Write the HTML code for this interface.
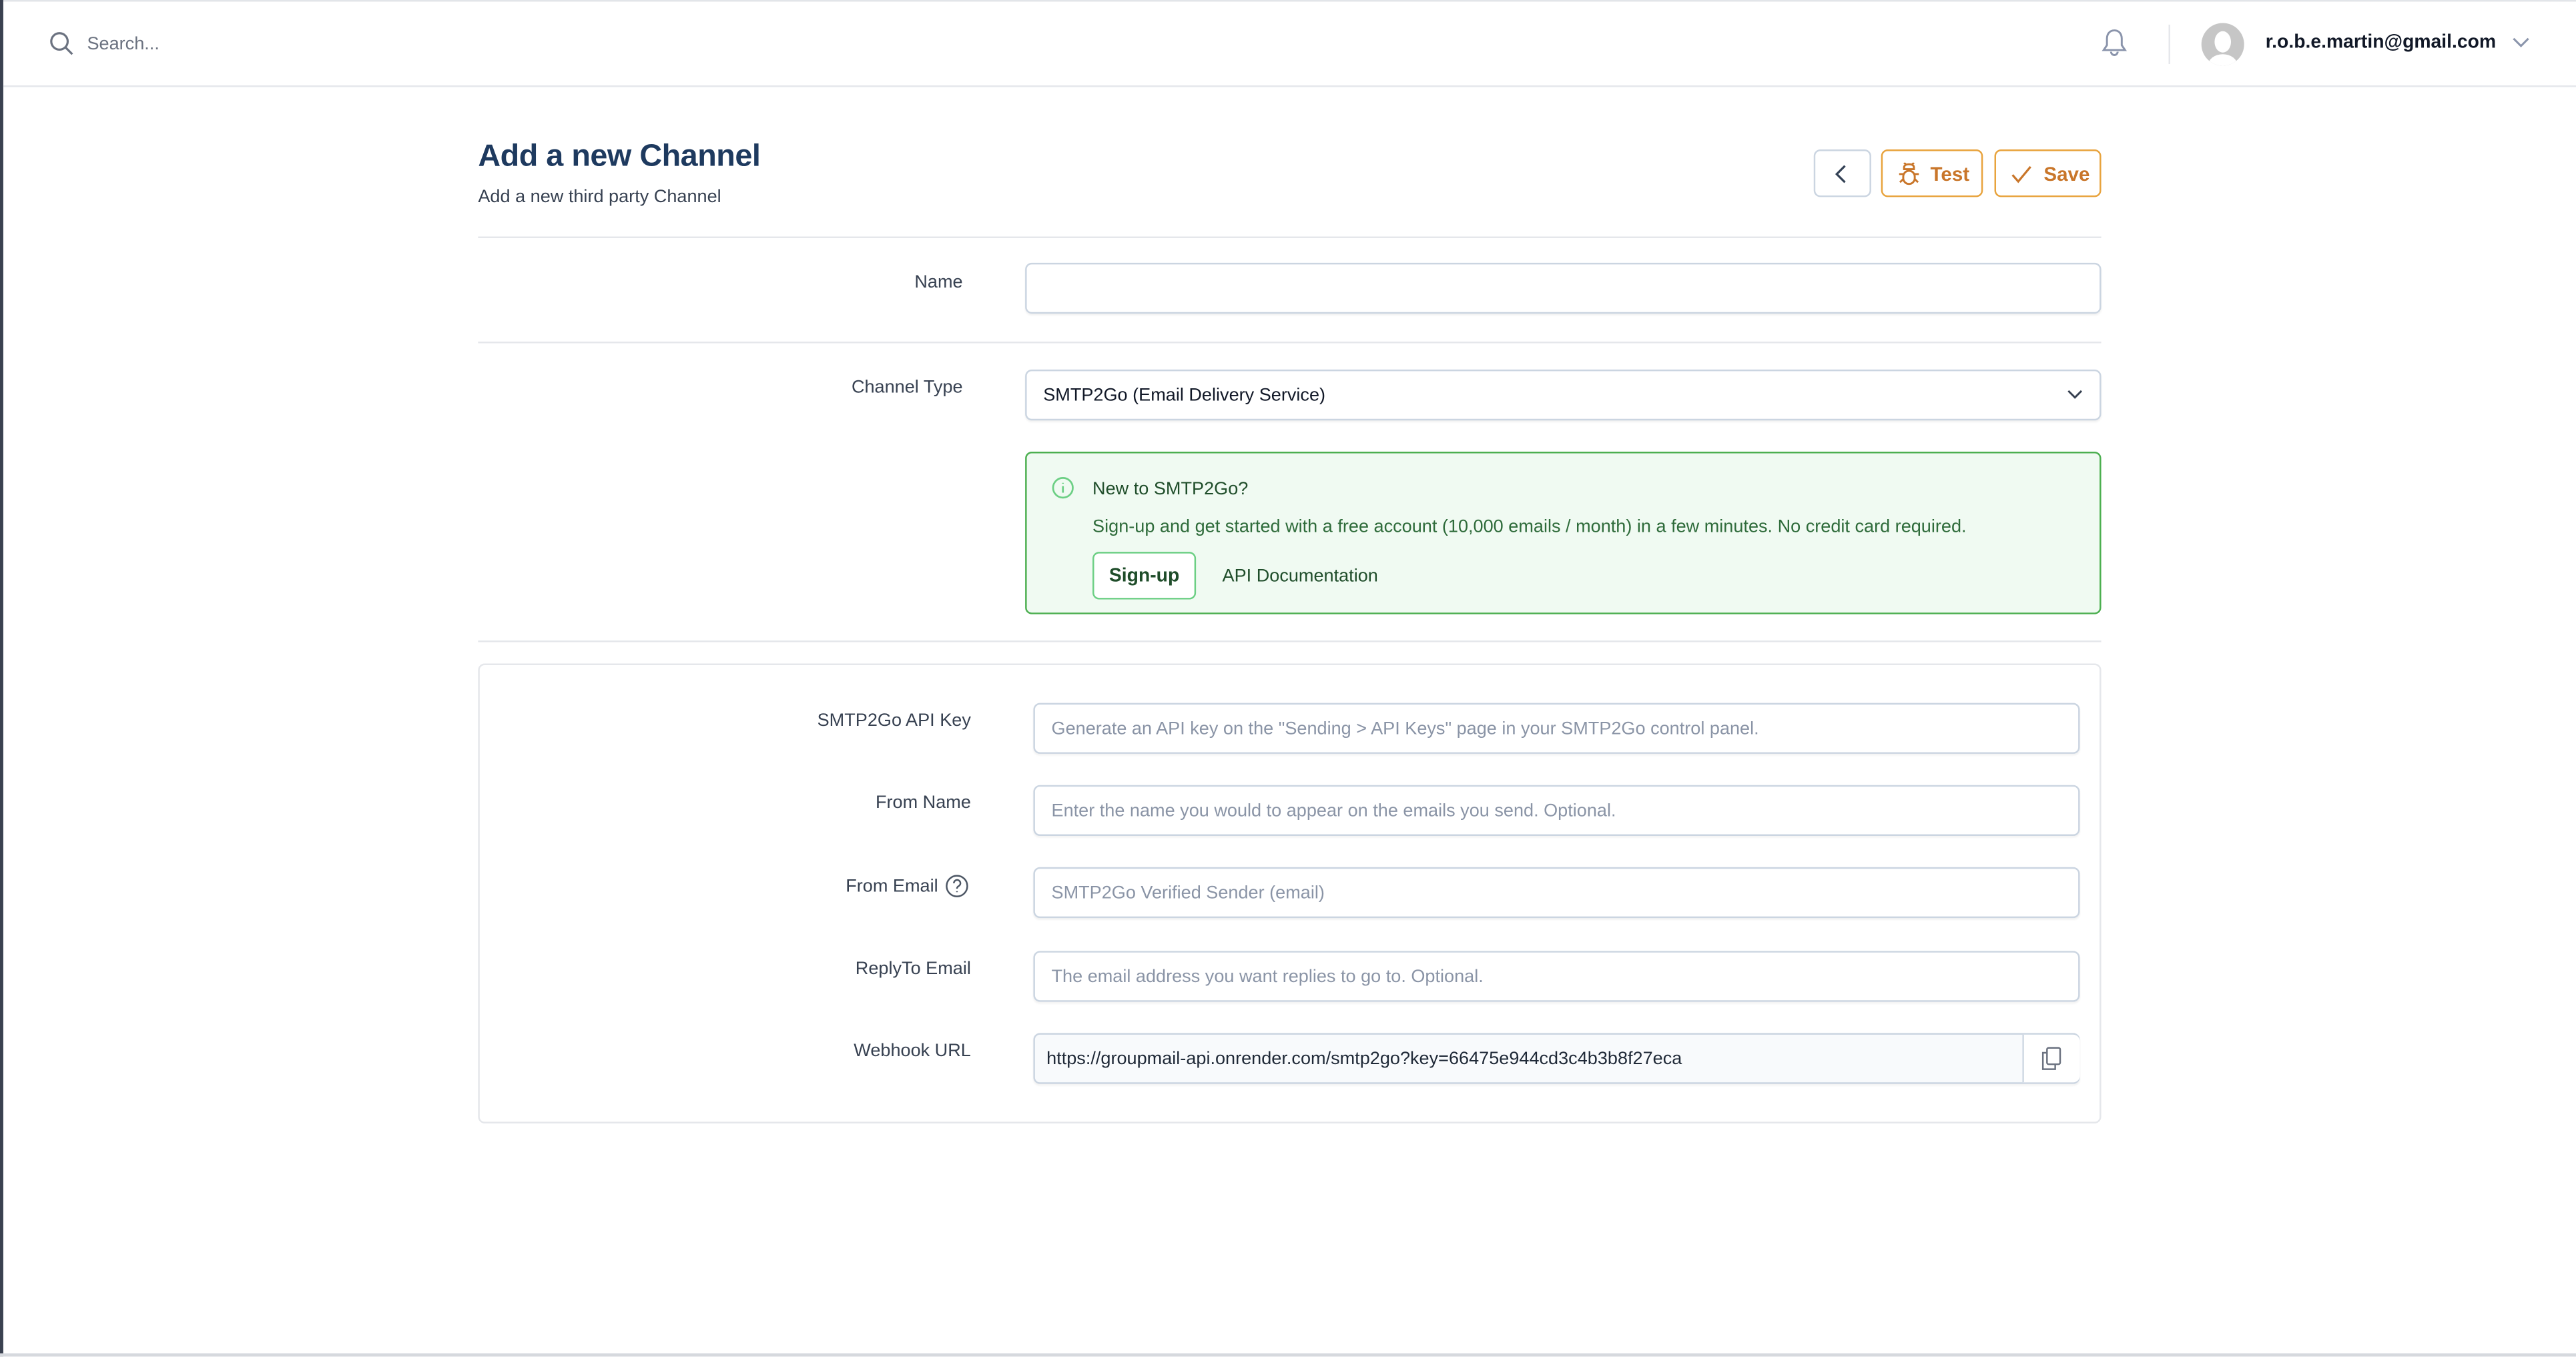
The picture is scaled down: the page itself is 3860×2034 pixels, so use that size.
<!DOCTYPE html>
<html><head><meta charset="utf-8"><style>
html,body{margin:0;padding:0;width:3860px;height:2034px;overflow:hidden;background:#fff}
#w{position:absolute;left:0;top:0;width:1568px;height:826px;transform:scale(2.46173);transform-origin:0 0;font-family:"Liberation Sans",sans-serif;color:#111827}
.a{position:absolute}
.inp{position:absolute;border:1px solid #cbd5e1;border-radius:4px;background:#fff;box-sizing:border-box;box-shadow:0 1px 1px rgba(0,0,0,.05)}
.ph{position:absolute;left:10px;top:9px;font-size:11px;color:#8a94a6}
.lbl{position:absolute;font-size:11px;color:#374151;text-align:right}
.hr{position:absolute;left:291px;width:988px;height:1px;background:#e5e7eb}
.btn{position:absolute;top:91px;height:29px;border:1px solid #e8a33d;border-radius:4px;box-sizing:border-box;color:#c9762a;font-weight:bold;font-size:12px}
</style></head><body><div id="w">
<div class="a" style="left:0;top:0;width:1568px;height:1px;background:#e2e5e9"></div>
<div class="a" style="left:0;top:0;width:2px;height:826px;background:#3a4150"></div>
<div class="a" style="left:0;top:824px;width:1568px;height:2px;background:#d6d9de"></div>
<div class="a" style="left:2px;top:52px;width:1566px;height:1px;background:#e5e7eb"></div>
<svg class="a" style="left:30px;top:19px" width="15" height="15" viewBox="0 0 15 15" fill="none" stroke="#6b7280" stroke-width="1.3"><circle cx="6.2" cy="6.2" r="5"/><path d="M10 10l4 4"/></svg>
<div class="a" style="left:53px;top:21px;font-size:11px;color:#6b7280">Search...</div>
<svg class="a" style="left:1279px;top:17px" width="16" height="19" viewBox="0 0 16 19" fill="none" stroke="#8a94ab" stroke-width="1.2"><path d="M8 1.5c-3 0-4.5 2.4-4.5 5v4L1.5 13.5h13l-2-3v-4c0-2.6-1.5-5-4.5-5z"/><path d="M6 14.5a2 2 0 004 0"/></svg>
<div class="a" style="left:1320px;top:15px;width:1px;height:24px;background:#e5e7eb"></div>
<div class="a" style="left:1340px;top:14px;width:26px;height:26px;border-radius:50%;background:#c6c6c6;overflow:hidden"><div class="a" style="left:8px;top:5px;width:10px;height:13px;border-radius:50%;background:#fff"></div><div class="a" style="left:4px;top:19px;width:18px;height:14px;border-radius:50%;background:#fff"></div></div>
<div class="a" style="left:1379px;top:20px;font-size:11.5px;font-weight:bold;color:#111827">r.o.b.e.martin@gmail.com</div>
<svg class="a" style="left:1529px;top:22px" width="11" height="8" viewBox="0 0 11 8" fill="none" stroke="#8a94ab" stroke-width="1.2"><path d="M1 1.5l4.5 4.5 4.5-4.5"/></svg>

<div class="a" style="left:291px;top:85px;font-size:19px;font-weight:bold;color:#1e3a5f;letter-spacing:-0.2px">Add a new Channel</div>
<div class="a" style="left:291px;top:114px;font-size:11px;color:#374151">Add a new third party Channel</div>
<div class="btn" style="left:1104px;width:35px;border-color:#cbd5e1"><svg class="a" style="left:11px;top:8px" width="10" height="12" viewBox="0 0 10 12" fill="none" stroke="#334155" stroke-width="1.3"><path d="M7 1L2 6l5 5"/></svg></div>
<div class="btn" style="left:1145px;width:62px"><svg class="a" style="left:9px;top:7px" width="14" height="15" viewBox="0 0 14 15" fill="none" stroke="#c9762a" stroke-width="1.2"><path d="M4 3c0-1.5 1.3-2 3-2s3 .5 3 2v1H4z"/><rect x="3.5" y="5" width="7" height="8" rx="3.5"/><path d="M3.5 7H1M10.5 7H13M3.5 10l-2 2M10.5 10l2 2M5 1L4 0M9 1l1-1"/></svg><span class="a" style="left:29px;top:7px">Test</span></div>
<div class="btn" style="left:1214px;width:65px"><svg class="a" style="left:9px;top:8px" width="13" height="12" viewBox="0 0 13 12" fill="none" stroke="#c9762a" stroke-width="1.3"><path d="M1 6.5l3.5 4L12 1.5"/></svg><span class="a" style="left:29px;top:7px">Save</span></div>

<div class="hr" style="top:144px"></div>
<div class="lbl" style="left:480px;width:106px;top:166px">Name</div>
<div class="inp" style="left:624px;top:160px;width:655px;height:31px"></div>
<div class="hr" style="top:208px"></div>
<div class="lbl" style="left:480px;width:106px;top:230px">Channel Type</div>
<div class="inp" style="left:624px;top:225px;width:655px;height:31px"><span class="a" style="left:10px;top:9px;font-size:11px;color:#111827">SMTP2Go (Email Delivery Service)</span><svg class="a" style="left:633px;top:11px" width="10" height="7" viewBox="0 0 10 7" fill="none" stroke="#374151" stroke-width="1.2"><path d="M1 1l4 4 4-4"/></svg></div>
<div class="a" style="left:624px;top:275px;width:655px;height:99px;box-sizing:border-box;border:1px solid #4caf50;border-radius:4px;background:#f0faf2">
<svg class="a" style="left:15px;top:14px" width="14" height="14" viewBox="0 0 14 14" fill="none" stroke="#6ccf84" stroke-width="1.1"><circle cx="7" cy="7" r="6"/><path d="M7 6v4M7 4v.5"/></svg>
<div class="a" style="left:40px;top:16px;font-size:11px;color:#1f4d2a">New to SMTP2Go?</div>
<div class="a" style="left:40px;top:39px;font-size:11px;color:#2e6b3a">Sign-up and get started with a free account (10,000 emails / month) in a few minutes. No credit card required.</div>
<div class="a" style="left:40px;top:60px;width:63px;height:29px;box-sizing:border-box;border:1px solid #6ccf84;border-radius:4px;background:#fff;font-size:11.5px;font-weight:bold;color:#1f4d2a;text-align:center;line-height:28px">Sign-up</div>
<div class="a" style="left:119px;top:69px;font-size:11px;color:#1f4d2a">API Documentation</div>
</div>
<div class="hr" style="top:390px"></div>
<div class="a" style="left:291px;top:404px;width:988px;height:280px;box-sizing:border-box;border:1px solid #e5e7eb;border-radius:4px"></div>
<div class="lbl" style="left:450px;width:141px;top:433px">SMTP2Go API Key</div>
<div class="inp" style="left:629px;top:428px;width:637px;height:31px"><span class="ph">Generate an API key on the "Sending &gt; API Keys" page in your SMTP2Go control panel.</span></div>
<div class="lbl" style="left:450px;width:141px;top:483px">From Name</div>
<div class="inp" style="left:629px;top:478px;width:637px;height:31px"><span class="ph">Enter the name you would to appear on the emails you send. Optional.</span></div>
<div class="lbl" style="left:450px;width:121px;top:534px">From Email</div>
<svg class="a" style="left:575px;top:532px" width="15" height="15" viewBox="0 0 15 15" fill="none" stroke="#4b5563" stroke-width="1"><circle cx="7.5" cy="7.5" r="6.3"/><path d="M5.6 5.8a2 2 0 113 1.7c-.7.4-1.1.8-1.1 1.6M7.5 10.6v.6"/></svg>
<div class="inp" style="left:629px;top:528px;width:637px;height:31px"><span class="ph">SMTP2Go Verified Sender (email)</span></div>
<div class="lbl" style="left:450px;width:141px;top:584px">ReplyTo Email</div>
<div class="inp" style="left:629px;top:579px;width:637px;height:31px"><span class="ph">The email address you want replies to go to. Optional.</span></div>
<div class="lbl" style="left:450px;width:141px;top:634px">Webhook URL</div>
<div class="inp" style="left:629px;top:629px;width:637px;height:31px;background:#f8fafc"><span class="a" style="left:7px;top:9px;font-size:11px;color:#1f2937">https://groupmail-api.onrender.com/smtp2go?key=66475e944cd3c4b3b8f27eca</span><div class="a" style="left:601px;top:0;width:34px;height:29px;border-left:1px solid #cbd5e1;background:#fff;border-radius:0 4px 4px 0"><svg class="a" style="left:10px;top:7px" width="13" height="15" viewBox="0 0 13 15" fill="none" stroke="#6b7280" stroke-width="1"><rect x="4" y="1" width="8" height="10" rx="1"/><path d="M4 4H1.5v10H9v-3"/></svg></div></div>
</div></body></html>
